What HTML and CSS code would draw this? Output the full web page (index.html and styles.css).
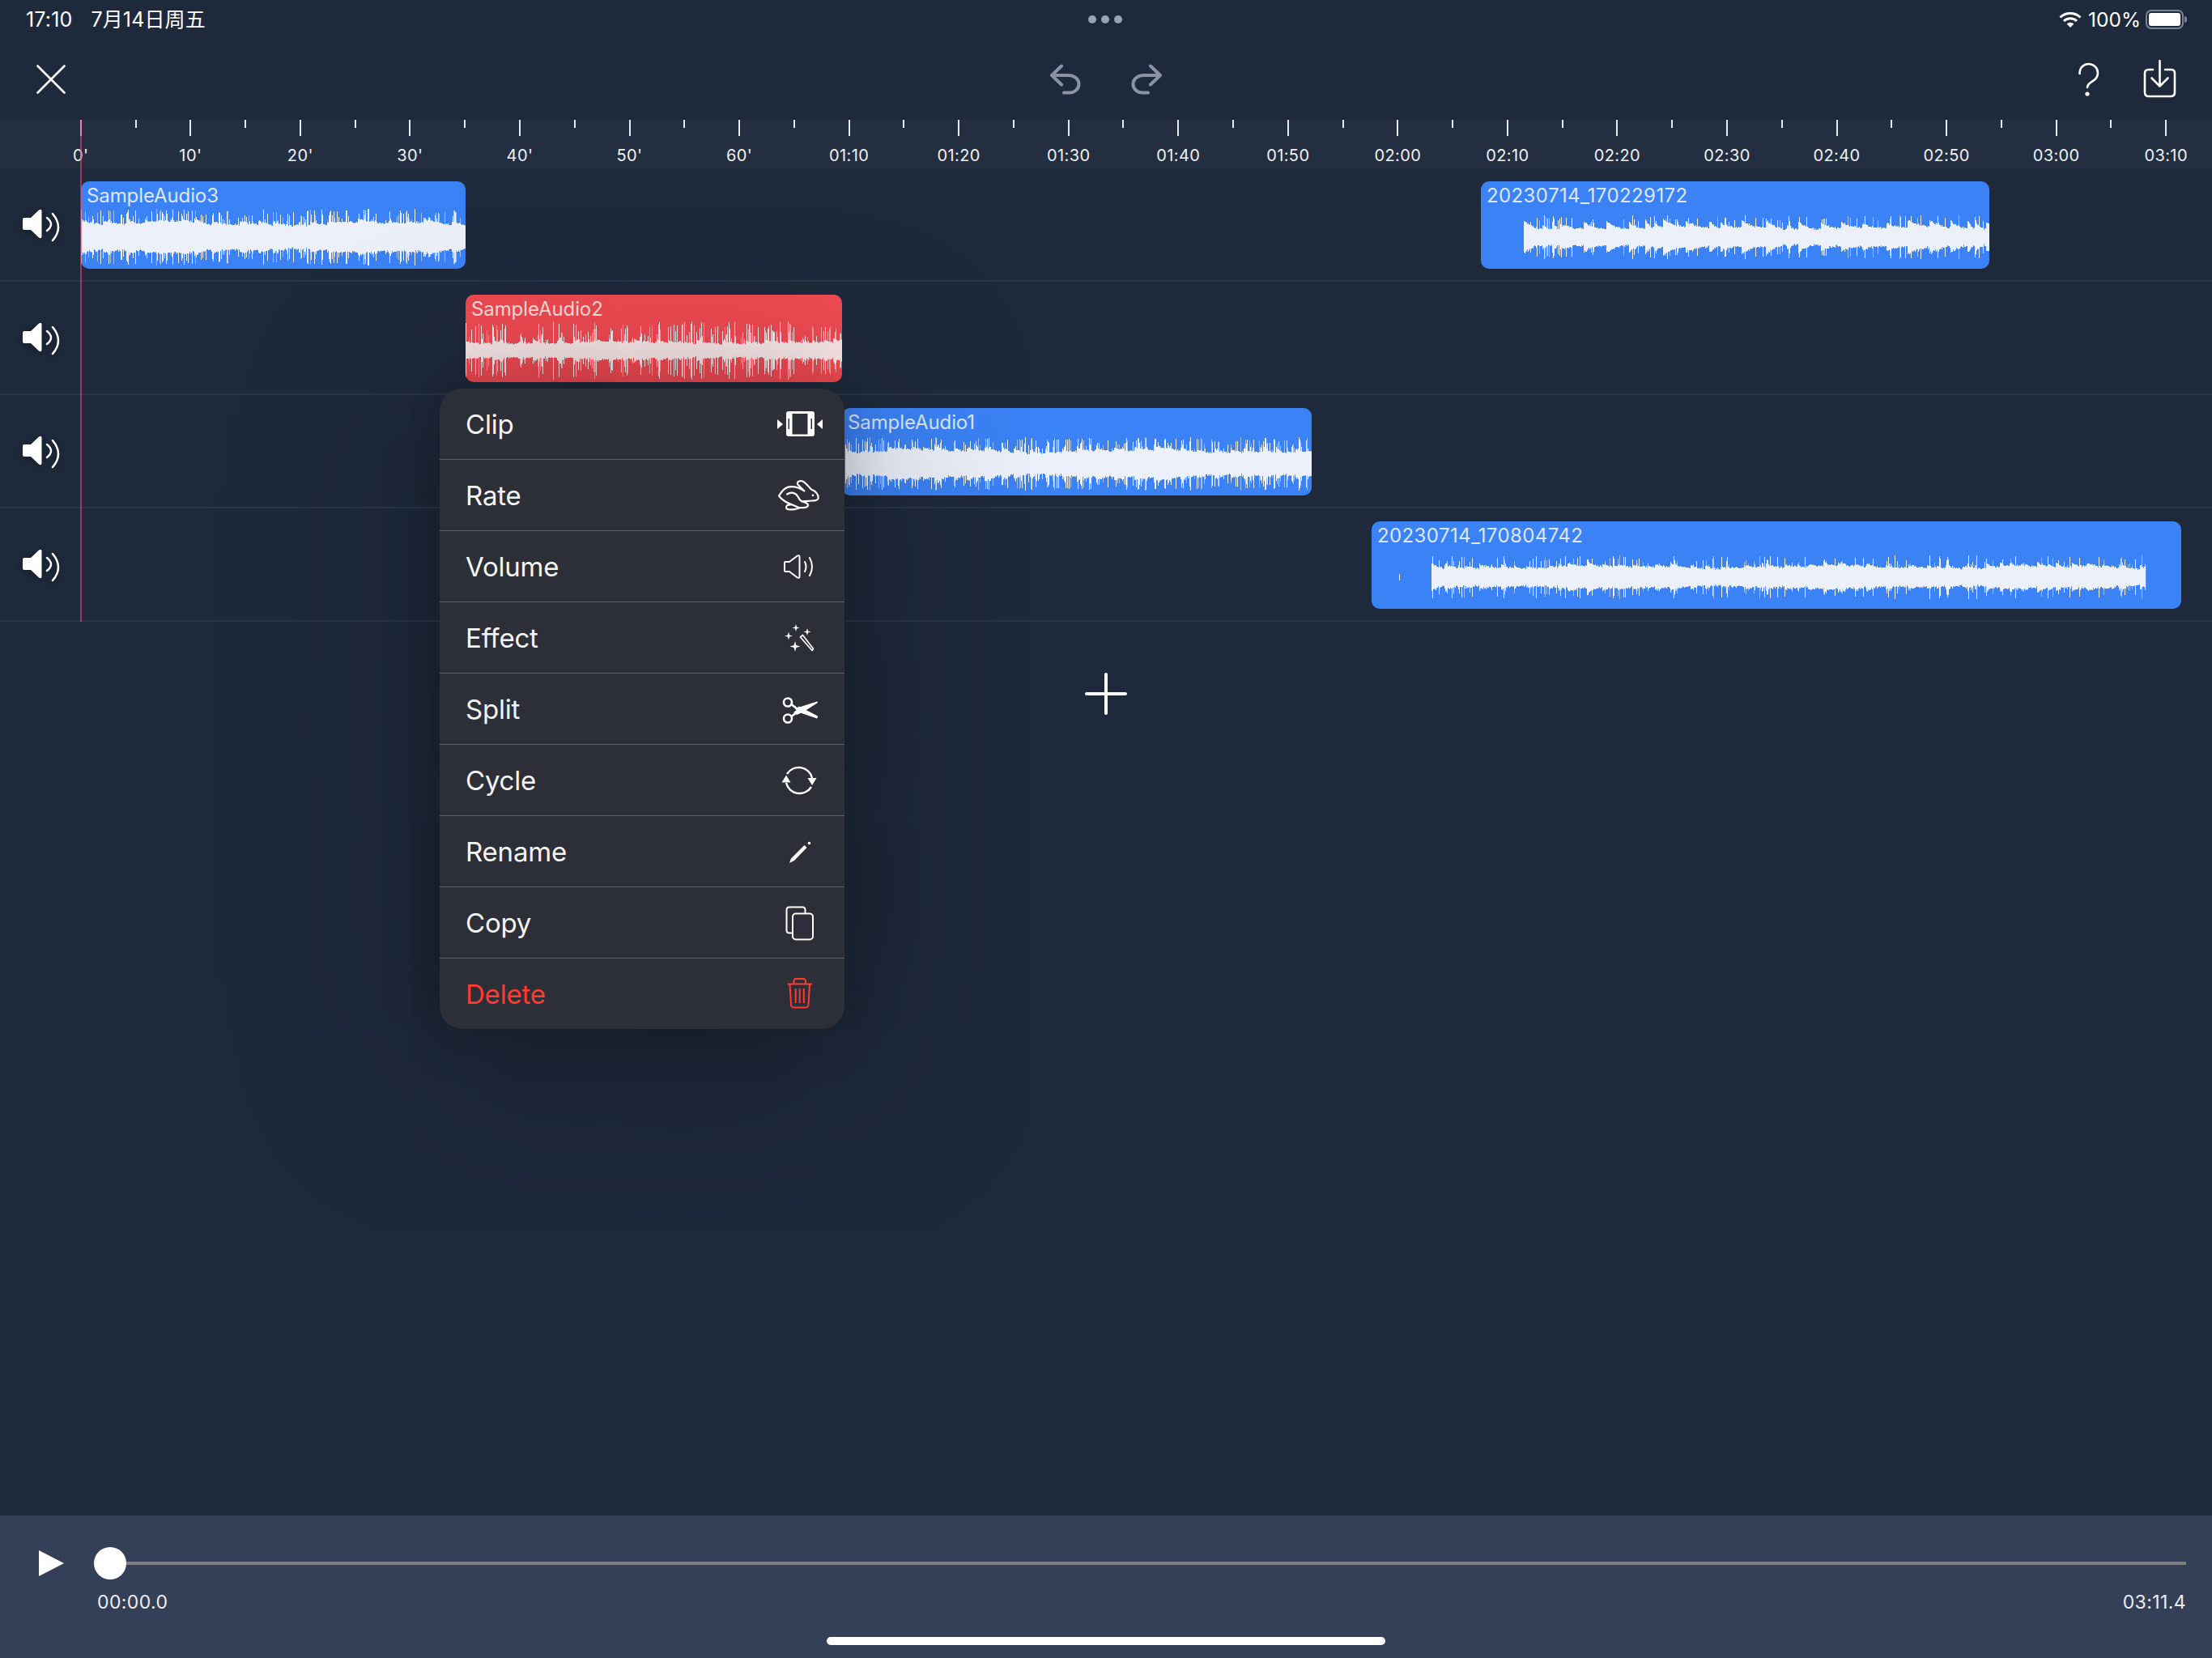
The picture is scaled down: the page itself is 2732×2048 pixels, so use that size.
FILE: index.html
```html
<!DOCTYPE html>
<html lang="en">
<head>
<meta charset="utf-8">
<title>Audio Editor</title>
<link rel="stylesheet" href="styles.css">
</head>
<body>
<div class="app">
  <header class="status">
    <div class="status-left"><span>17:10</span><span>7月14日周五</span></div>
    <div class="status-mid"><i></i><i></i><i></i></div>
    <div class="status-right">
      <svg class="wifi" viewBox="0 0 28 20"><path d="M1.5 7.5A18 18 0 0 1 26.5 7.5M6 12A11.5 11.5 0 0 1 22 12" fill="none" stroke="#fff" stroke-width="3"/><path d="M9.6 15.4A6.4 6.4 0 0 1 18.4 15.4L14 20Z" fill="#fff"/></svg>
      <span>100%</span>
      <div class="battery"><div class="battery-fill"></div></div>
    </div>
  </header>

  <nav class="toolbar">
    <div class="tool-side">
      <svg class="ico-close" viewBox="0 0 36 36"><path d="M1.5 1.5L34.5 34.5M34.5 1.5L1.5 34.5" stroke="#fff" stroke-width="2.6" stroke-linecap="round"/></svg>
    </div>
    <div class="tool-mid">
      <svg class="ico-undo" viewBox="0 0 38 38"><path d="M14 2.5L2 14L14 25.5M2 14H22C29 14 35.5 18 35.5 25C35.5 31 30 35.5 24 35.5H17" fill="none" stroke="#8b93a3" stroke-width="4" stroke-linecap="round" stroke-linejoin="round"/></svg>
      <svg class="ico-undo" viewBox="0 0 38 38"><path d="M24 2.5L36 14L24 25.5M36 14H16C9 14 2.5 18 2.5 25C2.5 31 8 35.5 14 35.5H21" fill="none" stroke="#8b93a3" stroke-width="4" stroke-linecap="round" stroke-linejoin="round"/></svg>
    </div>
    <div class="tool-side tool-right">
      <svg class="ico-help" viewBox="0 0 40 50"><path d="M8.5 20C8.5 12 14 8 19.500 8C26 8 31 13 31 19C31 26 26 28 22 31C19 33 18 35 18 37" fill="none" stroke="#fff" stroke-width="2.6" stroke-linecap="round"/><circle cx="18" cy="45" r="2.6" fill="#fff"/></svg>
      <svg class="ico-save" viewBox="0 0 42 50"><path d="M13 13H7.500Q3 13 3 17.500V41Q3 46 8 46H35Q40 46 40 41V17.500Q40 13 35.500 13H28" fill="none" stroke="#fff" stroke-width="2.6" stroke-linecap="round"/><path d="M21.500 2V33M11.500 23.500L21.500 33.500L31.500 23.500" fill="none" stroke="#fff" stroke-width="2.6" stroke-linecap="round" stroke-linejoin="round"/></svg>
    </div>
  </nav>

  <div class="timeline">
    <div class="ruler">
      <div class="mark"><b></b><span>0'</span></div>
      <div class="mark"><b></b><span>10'</span></div>
      <div class="mark"><b></b><span>20'</span></div>
      <div class="mark"><b></b><span>30'</span></div>
      <div class="mark"><b></b><span>40'</span></div>
      <div class="mark"><b></b><span>50'</span></div>
      <div class="mark"><b></b><span>60'</span></div>
      <div class="mark"><b></b><span>01:10</span></div>
      <div class="mark"><b></b><span>01:20</span></div>
      <div class="mark"><b></b><span>01:30</span></div>
      <div class="mark"><b></b><span>01:40</span></div>
      <div class="mark"><b></b><span>01:50</span></div>
      <div class="mark"><b></b><span>02:00</span></div>
      <div class="mark"><b></b><span>02:10</span></div>
      <div class="mark"><b></b><span>02:20</span></div>
      <div class="mark"><b></b><span>02:30</span></div>
      <div class="mark"><b></b><span>02:40</span></div>
      <div class="mark"><b></b><span>02:50</span></div>
      <div class="mark"><b></b><span>03:00</span></div>
      <div class="mark"><b></b><span>03:10</span></div>
    </div>

    <div class="track">
      <svg class="speaker" viewBox="0 -2 60 60"><use href="#spk"/></svg>
      <div class="clip" style="left:100px;width:475px">
        <div class="clip-name">SampleAudio3</div>
        <svg class="wave" data-seed="11" data-start="0" data-end="475" data-core="15" data-mid="20" data-spike="35" data-rate="0.34" data-beat="26"></svg>
      </div>
      <div class="clip" style="left:1829px;width:628px">
        <div class="clip-name clip-name-num">20230714_170229172</div>
        <svg class="wave" data-seed="52" data-start="53" data-end="628" data-core="10" data-mid="20" data-spike="27" data-rate="0.1" data-beat="20"></svg>
      </div>
    </div>
    <div class="track">
      <svg class="speaker" viewBox="0 -2 60 60"><use href="#spk"/></svg>
      <div class="clip clip-red" style="left:575px;width:465px">
        <div class="clip-name">SampleAudio2</div>
        <svg class="wave" data-seed="23" data-start="0" data-end="465" data-core="8" data-mid="13" data-spike="36" data-rate="0.36" data-beat="24"></svg>
      </div>
    </div>
    <div class="track">
      <svg class="speaker" viewBox="0 -2 60 60"><use href="#spk"/></svg>
      <div class="clip" style="left:1040px;width:580px">
        <div class="clip-name">SampleAudio1</div>
        <svg class="wave" data-seed="37" data-start="4" data-end="580" data-core="14" data-mid="20" data-spike="33" data-rate="0.34" data-beat="22"></svg>
      </div>
    </div>
    <div class="track">
      <svg class="speaker" viewBox="0 -2 60 60"><use href="#spk"/></svg>
      <div class="clip" style="left:1694px;width:1000px">
        <div class="clip-name clip-name-num">20230714_170804742</div>
        <svg class="wave" data-seed="71" data-start="74" data-end="956" data-core="11" data-mid="16" data-spike="27" data-rate="0.16" data-beat="20" data-blip="34"></svg>
      </div>
    </div>
    <div class="playhead"></div>
  </div>

  <div class="add-area">
    <svg class="ico-plus" viewBox="0 0 52 52"><path d="M26 2V50M2 26H50" stroke="#fff" stroke-width="4" stroke-linecap="round"/></svg>
  </div>

  <footer class="player">
    <div class="player-top">
      <svg class="ico-play" viewBox="0 0 31 32"><path d="M0 0L31 16L0 32Z" fill="#fff"/></svg>
      <div class="thumb"></div>
      <div class="line"></div>
    </div>
    <div class="times"><span>00:00.0</span><span>03:11.4</span></div>
    <div class="home"></div>
  </footer>

  <div class="menu">
    <div class="menu-row"><span>Clip</span>
      <svg class="ico" viewBox="0 0 60 60"><path d="M17 14H46Q49 14 49 17V42Q49 45 46 45H17Q14 45 14 42V17Q14 14 17 14ZM21.500 17V42.500H40.500V17ZM16.500 23V36H18V23ZM44.500 23V36H46V23Z" fill="#fff" fill-rule="evenodd"/><path d="M3 24L10 30L3 36ZM59 24L52 30L59 36Z" fill="#fff"/></svg>
    </div>
    <div class="menu-row"><span>Rate</span>
      <svg class="ico" viewBox="0 0 60 60"><g transform="translate(-7 -1.5) scale(.3333)" fill="none" stroke="#fff" stroke-width="6.500" stroke-linejoin="round" stroke-linecap="round"><path d="M36 96C48 76 60 62 82 62C98 62 114 66 130 78L106 54C100 44 114 38 124 42C134 46 146 62 156 72C172 78 184 92 182 104C180 112 172 114 160 114L134 116L120 116C132 120 146 124 144 132C142 140 128 140 112 140C104 146 84 148 70 146C62 144 60 136 68 130L84 128C66 122 48 112 36 96Z"/><path d="M66 90C82 80 98 84 106 98C110 106 114 112 120 116"/><path d="M84 128L112 140"/></g><circle cx="47" cy="29.800" r="1.400" fill="#fff"/></svg>
    </div>
    <div class="menu-row"><span>Volume</span>
      <svg class="ico" viewBox="0 0 60 60"><path d="M13 24H18L27.500 16.800Q30.500 15 30.500 18V42Q30.500 45 27.500 43.200L18 36H13Q12 36 12 35V25Q12 24 13 24Z" fill="none" stroke="#fff" stroke-width="2" stroke-linejoin="round"/><path d="M37 24Q40 30 37 36M43 19Q49 30 43 41" fill="none" stroke="#fff" stroke-width="2" stroke-linecap="round"/></svg>
    </div>
    <div class="menu-row"><span>Effect</span>
      <svg class="ico" viewBox="0 0 60 60"><g fill="#fff"><path d="M26 13L27 16.500L30.500 17.500L27 18.500L26 22L25 18.500L21.500 17.500L25 16.500Z"/><path d="M40 18L41 21.500L44.500 22.500L41 23.500L40 27L39 23.500L35.500 22.500L39 21.500Z"/><path d="M17 22.500L18.100 26.400L22 27.500L18.100 28.600L17 32.500L15.900 28.600L12 27.500L15.900 26.400Z"/><path d="M25 34L26.400 39.100L31.500 40.500L26.400 41.900L25 47L23.600 41.900L18.500 40.500L23.600 39.100Z"/></g><path d="M31.500 29L34.500 26.500L47.500 43.500L46 45.500Z" fill="none" stroke="#fff" stroke-width="1.700" stroke-linejoin="round"/></svg>
    </div>
    <div class="menu-row"><span>Split</span>
      <svg class="ico" viewBox="0 0 60 60"><g fill="none" stroke="#fff" stroke-width="2.600"><circle cx="16" cy="21.500" r="5"/><circle cx="16" cy="41.500" r="5"/><path d="M20.500 24L28 30M20.500 39L28 33"/></g><path d="M23 34L32 27L52 20.500Q53.500 20.500 53 22L35 33.500L27 37ZM30 26.500L53 38.500Q53.500 40.500 52 41.500L33 35L25 30Z" fill="#fff"/></svg>
    </div>
    <div class="menu-row"><span>Cycle</span>
      <svg class="ico" viewBox="0 0 60 60"><path d="M15 22A17 17 0 0 1 46 27M45 38A17 17 0 0 1 14 33" fill="none" stroke="#fff" stroke-width="2.400"/><path d="M40.500 27H51.500L46 36ZM8.500 32.500H19.500L14 23.500Z" fill="#fff"/></svg>
    </div>
    <div class="menu-row"><span>Rename</span>
      <svg class="ico" viewBox="0 0 60 60"><path d="M18 44L20 38.500L36.500 22L39.500 25L24 41Z" fill="#fff"/><circle cx="42.500" cy="19.500" r="1.800" fill="#fff"/></svg>
    </div>
    <div class="menu-row"><span>Copy</span>
      <svg class="ico" viewBox="0 0 60 60"><path d="M21.500 42.500H18Q14.500 42.500 14.500 39V14Q14.500 10.500 18 10.500H34Q37.500 10.500 37.500 14V18.500" fill="none" stroke="#fff" stroke-width="2"/><rect x="22" y="18.500" width="25" height="32" rx="4" fill="none" stroke="#fff" stroke-width="2"/></svg>
    </div>
    <div class="menu-row menu-danger"><span>Delete</span>
      <svg class="ico" viewBox="0 0 60 60"><g fill="none" stroke="#ff3b30" stroke-width="2"><path d="M15.500 17.500H46"/><path d="M23.500 17.500V14Q23.500 11 26.500 11H35Q38 11 38 14V17.500"/><path d="M18.500 17.500L20 43Q20.300 46.500 24 46.500H37.500Q41.200 46.500 41.500 43L43 17.500"/><path d="M25.700 23V41M30.700 23V41M35.800 23V41"/></g></svg>
    </div>
  </div>
</div>

<svg class="defs" width="0" height="0">
  <defs>
    <g id="spk">
      <path d="M10 20H18L28 10.500Q31.500 8.500 31.500 12V43Q31.500 46.500 28 44.500L18 35H10Q8 35 8 33V22Q8 20 10 20Z" fill="#fff"/>
      <path d="M38 20Q48 28 38 36M45 15Q59 32 45 48" fill="none" stroke="#fff" stroke-width="2.500" stroke-linecap="round"/>
    </g>
  </defs>
</svg>
<script src="script.js"></script>
</body>
</html>
```
FILE: styles.css
```css
* { box-sizing: border-box; }
html, body { margin: 0; padding: 0; }
body {
  background: #1e293b;
  color: #fff;
  font-family: Inter, "Noto Sans CJK SC", "Liberation Sans", sans-serif;
}
.app {
  position: relative;
  width: 2732px;
  height: 2048px;
  overflow: hidden;
  display: flex;
  flex-direction: column;
  background: #1e293b;
}
.defs { position: absolute; }

/* status bar */
.status {
  height: 48px;
  display: flex;
  align-items: center;
  padding: 0 35px;
  font-size: 25px;
  line-height: 30px;
}
.status-left { flex: 1; display: flex; align-items: baseline; gap: 23px; margin-left: -3px; letter-spacing: .15px; }
.status-mid { display: flex; gap: 6px; }
.status-mid i { width: 10px; height: 10px; border-radius: 50%; background: #94a3b8; }
.status-right { flex: 1; display: flex; align-items: center; justify-content: flex-end; gap: 6px; font-size: 24.5px; }
.wifi { width: 28px; height: 20px; margin-right: 2px; }
.battery {
  position: relative;
  width: 47px;
  height: 24px;
  border: 2px solid #7c8494;
  border-radius: 7px;
  padding: 2px;
}
.battery::after {
  content: "";
  position: absolute;
  right: -6px;
  top: 6px;
  width: 3px;
  height: 8px;
  border-radius: 0 3px 3px 0;
  background: #7c8494;
}
.battery-fill { width: 100%; height: 100%; background: #fff; border-radius: 3px; }

/* toolbar */
.toolbar {
  height: 100px;
  display: flex;
  align-items: center;
  padding: 0 45px;
}
.tool-side { flex: 1; display: flex; align-items: center; }
.tool-right { justify-content: flex-end; gap: 46px; }
.tool-mid { display: flex; gap: 62px; }
.ico-close { width: 36px; height: 36px; }
.ico-undo { width: 38px; height: 38px; }
.ico-help { width: 40px; height: 50px; margin-top: -4px; }
.ico-save { width: 42px; height: 50px; margin-right: -1px; }

/* ruler */
.timeline { position: relative; }
.ruler {
  height: 60px;
  display: flex;
  padding-left: 32px;
  background: #232f41;
}
.mark {
  position: relative;
  flex: 0 0 135.56px;
  display: flex;
  flex-direction: column;
  align-items: center;
}
.mark b { width: 2px; height: 20px; background: #e6e9ee; }
.mark + .mark::before {
  content: "";
  position: absolute;
  left: -1px;
  top: 0;
  width: 2px;
  height: 10px;
  background: #e6e9ee;
}
.mark span {
  margin-top: 12px;
  font-size: 20px;
  line-height: 24px;
  letter-spacing: 0.4px;
  color: #eef0f3;
}

/* tracks */
.track {
  position: relative;
  height: 140px;
  border-bottom: 2px solid #2b3748;
}
.speaker {
  position: absolute;
  left: 20px;
  top: 39px;
  width: 60px;
  height: 60px;
  filter: drop-shadow(0 2px 5px rgba(0,0,0,.35));
}
.clip {
  position: absolute;
  top: 16px;
  height: 108px;
  display: flex;
  flex-direction: column;
  background: #3b82f6;
  border-radius: 10px;
  overflow: hidden;
}
.clip-red { background: #f04a52; }
.clip-name {
  height: 30px;
  padding: 4px 0 0 7px;
  font-size: 24px;
  line-height: 27px;
  letter-spacing: -.1px;
  color: #dbe7fd;
  white-space: nowrap;
}
.clip-name-num { letter-spacing: .4px; }
.clip-red .clip-name { color: #fcdcdc; }
.wave { flex: 1; display: block; width: 100%; min-height: 0; }
.wave .solid { fill: #ebf0fb; }
.wave .faint { fill: #ebf0fb; opacity: .55; }
.clip-red .wave .solid { fill: #f8e6e7; }
.clip-red .wave .faint { fill: #f8e6e7; }
.playhead {
  position: absolute;
  left: 99px;
  top: 0;
  bottom: 0;
  width: 2px;
  background: rgba(239,68,110,.62);
}

/* add */
.add-area {
  flex: 1;
  display: flex;
  justify-content: center;
  align-items: flex-start;
  padding-top: 63px;
}
.ico-plus { width: 52px; height: 52px; }

/* player */
.player {
  height: 176px;
  background: #344057;
  display: flex;
  flex-direction: column;
  padding: 39px 32px 16px 48px;
}
.player-top { display: flex; align-items: center; }
.ico-play { width: 31px; height: 32px; margin-right: 37px; }
.thumb { flex: none; width: 40px; height: 40px; border-radius: 50%; background: #fff; }
.line { flex: 1; height: 4px; background: #808080; }
.times {
  display: flex;
  justify-content: space-between;
  margin: 14px 0 0 72px;
  font-size: 23px;
  line-height: 28px;
  letter-spacing: .4px;
  color: #eceef2;
}
.home {
  flex: none;
  align-self: center;
  width: 690px;
  height: 10px;
  margin: 29px 0 0 -16px;
  border-radius: 5px;
  background: #fff;
}

/* context menu */
.menu {
  position: absolute;
  left: 543px;
  top: 480px;
  width: 500px;
  border-radius: 28px;
  background: #2c2f38;
  box-shadow: 0 0 70px rgba(0,0,0,.22), 0 30px 320px rgba(0,0,0,.38);
  font-size: 33px;
  letter-spacing: -.2px;
  color: #f4f4f5;
}
.menu-row {
  height: 88px;
  display: flex;
  align-items: center;
  justify-content: space-between;
  padding: 0 26px 0 32px;
  border-bottom: 1.5px solid #5c5f68;
}
.menu-row:last-child { border-bottom: 0; height: 87px; }
.menu-danger { color: #ff3b30; }
.ico { width: 60px; height: 60px; flex: none; }
```
FILE: script.js
```js
(function () {
  var NS = 'http://www.w3.org/2000/svg';
  function rng(seed) {
    var s = seed * 2654435761 >>> 0;
    return function () {
      s = (s + 0x6D2B79F5) >>> 0;
      var t = Math.imul(s ^ (s >>> 15), 1 | s);
      t ^= t + Math.imul(t ^ (t >>> 7), 61 | t);
      return ((t ^ (t >>> 14)) >>> 0) / 4294967296;
    };
  }
  document.querySelectorAll('.wave').forEach(function (svg) {
    var d = svg.dataset;
    var r = rng(+d.seed);
    var w = svg.clientWidth, h = svg.clientHeight, c = h / 2;
    var core = +d.core, mid = +d.mid, spike = +d.spike, rate = +d.rate, beat = +d.beat;
    var p1 = d.blip ? 'M' + d.blip + ' ' + (c - 4) + 'h1v8h-1z' : '', p2 = '';
    var ph1 = r() * 6, ph2 = r() * 6;
    var nextBeat = +d.start, beatStart = +d.start, beatLen = beat, beatAmp = 1;
    for (var x = +d.start; x < +d.end; x++) {
      if (x >= nextBeat) {
        beatStart = x;
        beatLen = Math.round(beat * (.5 + r()));
        nextBeat = x + beatLen;
        beatAmp = .45 + r() * .55;
      }
      var decay = 1 - (x - beatStart) / beatLen;
      var slow = Math.sin(x / 43 + ph1) * .5 + Math.sin(x / 17 + ph2) * .3;
      var a = core + slow * core * .25 + (mid - core) * decay * decay * beatAmp + r() * 2.5;
      var a2 = a;
      var chance = rate * (.4 + decay * 1.4);
      if (r() < chance) a2 = mid * .9 + r() * (spike - mid * .9);
      a = Math.round(a); a2 = Math.round(a2);
      var bot = Math.round(a * (0.92 + r() * .12));
      p1 += 'M' + x + ' ' + (c - a) + 'h1.2v' + (a + bot) + 'h-1.2z';
      if (a2 > a) {
        if (r() < .75) p1 += 'M' + x + ' ' + (c - a2) + 'h1v' + (a2 * 2) + 'h-1z';
        else p2 += 'M' + x + ' ' + (c - a2) + 'h1v' + (a2 * 2) + 'h-1z';
      }
    }
    svg.setAttribute('viewBox', '0 0 ' + w + ' ' + h);
    [['solid', p1], ['faint', p2]].forEach(function (e) {
      var path = document.createElementNS(NS, 'path');
      path.setAttribute('class', e[0]);
      path.setAttribute('d', e[1]);
      svg.appendChild(path);
    });
  });
})();
```
